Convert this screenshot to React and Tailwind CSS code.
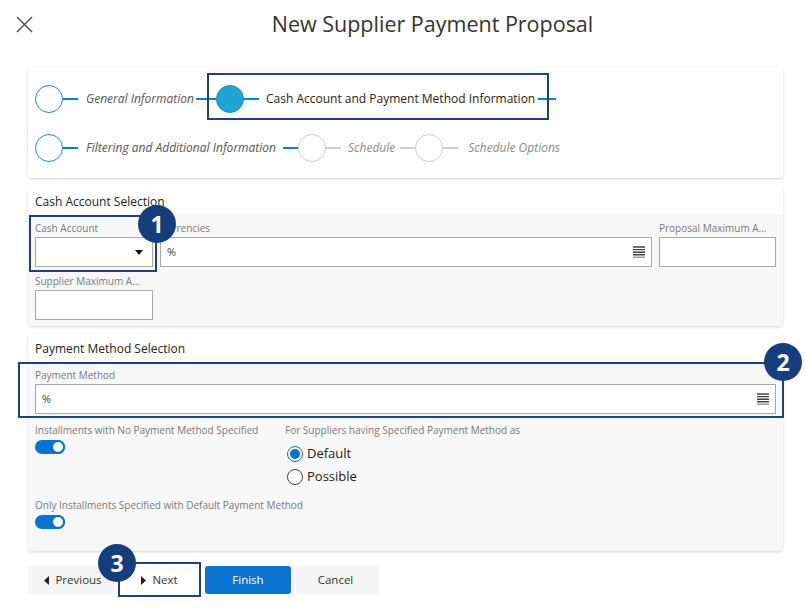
import React from "react";

const navy = "border-[#1f3f7f]";

function Badge({ n, className }) {
  return (
    <div
      className={`absolute z-20 w-[38px] h-[38px] rounded-full bg-[#173e7c] text-white flex items-center justify-center text-[23px] font-bold leading-none ${className}`}
    >
      {n}
    </div>
  );
}

function ListIcon() {
  return (
    <svg width="12" height="12" viewBox="0 0 12 12">
      <path d="M0 1h12M0 3.6h12M0 6.2h12M0 8.8h12" stroke="#444" strokeWidth="1.4" />
      <path d="M0 11.2h12" stroke="#999" strokeWidth="1.4" />
    </svg>
  );
}

function Field({ label, width, children }) {
  return (
    <div className={width}>
      <div className="text-[10px] leading-[15px] text-[#7a7a7a] truncate">{label}</div>
      <div className="mt-[1px] h-[30px] bg-white border border-[#a8a8a8] flex items-center px-[6px] text-[11px] text-[#444]">
        {children}
      </div>
    </div>
  );
}

function Toggle() {
  return (
    <div className="w-[30px] h-[14px] rounded-full bg-[#0b72cf] flex items-center justify-end">
      <div className="w-[14px] h-[14px] rounded-full bg-white border-2 border-[#0b72cf]" />
    </div>
  );
}

function Line({ gray, w = "w-[15px]", className = "" }) {
  return <div className={`${w} h-[2px] ${gray ? "bg-[#cfcfcf]" : "bg-[#0c80c2]"} ${className}`} />;
}

function Circle({ gray, filled }) {
  if (filled)
    return <div className="w-[28px] h-[28px] rounded-full bg-[#1ea5d3] border border-[#1b8dcf] shrink-0" />;
  return (
    <div
      className={`w-[28px] h-[28px] rounded-full border-[1.5px] shrink-0 ${gray ? "border-[#cdcdcd]" : "border-[#1b8dcf]"}`}
    />
  );
}

export default function App() {
  return (
    <div className="w-[805px] h-[613px] bg-white overflow-hidden" style={{ fontFamily: '"Open Sans", sans-serif' }}>
      {/* header */}
      <div className="h-[48px] flex items-center">
        <div className="w-[60px] h-[48px] flex items-center pl-[16px]">
          <svg width="17" height="17" viewBox="0 0 17 17">
            <path d="M1 1l15 15M16 1L1 16" stroke="#555" strokeWidth="1.5" />
          </svg>
        </div>
        <div className="flex-1 text-center text-[21.5px] text-[#333]">New Supplier Payment Proposal</div>
      </div>

      <div className="ml-[28px] w-[755px]">
        {/* steps */}
        <div className="relative mt-[19px] bg-white rounded-[4px] shadow-[0_1px_3px_rgba(0,0,0,0.16)] px-[7px] pt-[17px] pb-[17px] text-[12px]">
          <div className="flex items-center h-[28px] pt-[1px]">
            <Circle />
            <Line />
            <span className="ml-[8px] italic text-[#555]">General Information</span>
            <Line w="w-[20px]" className="ml-[2px]" />
            <Circle filled />
            <Line />
            <span className="ml-[7px] text-[#222]">Cash Account and Payment Method Information</span>
            <Line w="w-[18px]" className="ml-[3px]" />
          </div>
          <div className="flex items-center h-[28px] mt-[21px] pt-[1px]">
            <Circle />
            <Line />
            <span className="ml-[8px] italic text-[#555]">Filtering and Additional Information</span>
            <Line className="ml-[7px]" />
            <Circle gray />
            <Line gray />
            <span className="ml-[7px] italic text-[#8a8a8a]">Schedule</span>
            <Line gray className="ml-[5px]" />
            <Circle gray />
            <Line gray />
            <span className="ml-[10px] italic text-[#8a8a8a]">Schedule Options</span>
          </div>
          <div className={`absolute left-[179px] top-[6px] w-[342px] h-[47px] border-2 ${navy}`} />
        </div>

        {/* cash account selection */}
        <div className="relative mt-[8px] rounded-[4px] shadow-[0_1px_3px_rgba(0,0,0,0.16)]">
          <div className="h-[28px] bg-white rounded-t-[4px] px-[7px] pt-[3px] flex items-center text-[12px] font-medium text-[#222]">
            Cash Account Selection
          </div>
          <div className="bg-[#f7f7f7] rounded-b-[4px] px-[7px] pt-[7px] pb-[6px]">
            <div className="flex gap-[7px]">
              <Field label="Cash Account" width="w-[118px]">
                <div className="flex-1" />
                <svg width="8" height="5" viewBox="0 0 8 5" className="mr-[3px]">
                  <path d="M0 0h8L4 5z" fill="#111" />
                </svg>
              </Field>
              <Field label="Currencies" width="flex-1">
                <span className="flex-1">%</span>
                <ListIcon />
              </Field>
              <Field label="Proposal Maximum A..." width="w-[117px]" />
            </div>
            <div className="flex mt-[7px]">
              <Field label="Supplier Maximum A..." width="w-[118px]" />
            </div>
          </div>
          <div className={`absolute left-[1px] top-[29px] w-[128px] h-[57px] border-2 ${navy}`} />
          <Badge n="1" className="left-[110px] top-[19px]" />
        </div>

        {/* payment method selection */}
        <div className="relative mt-[7px] rounded-[4px] shadow-[0_1px_3px_rgba(0,0,0,0.16)]">
          <div className="h-[29px] bg-white rounded-t-[4px] px-[7px] pt-[3px] flex items-center text-[12px] font-medium text-[#222]">
            Payment Method Selection
          </div>
          <div className="bg-[#f7f7f7] rounded-b-[4px] px-[7px] pt-[6px] pb-[22px]">
            <Field label="Payment Method" width="w-full">
              <span className="flex-1">%</span>
              <ListIcon />
            </Field>
            <div className="flex mt-[9px]">
              <div className="w-[250px]">
                <div className="text-[10px] leading-[15px] text-[#7a7a7a]">
                  Installments with No Payment Method Specified
                </div>
                <div className="mt-[2px]">
                  <Toggle />
                </div>
              </div>
              <div>
                <div className="text-[10px] leading-[15px] text-[#7a7a7a]">
                  For Suppliers having Specified Payment Method as
                </div>
                <div className="mt-[6px] h-[20px] flex items-center pl-[2px] text-[13px] text-[#222]">
                  <div className="w-[16px] h-[16px] rounded-full border-[1.5px] border-[#0b72cf] flex items-center justify-center">
                    <div className="w-[10px] h-[10px] rounded-full bg-[#0b72cf]" />
                  </div>
                  <span className="ml-[4px]">Default</span>
                </div>
                <div className="mt-[3px] h-[20px] flex items-center pl-[2px] text-[13px] text-[#222]">
                  <div className="w-[16px] h-[16px] rounded-full border border-[#444] bg-white" />
                  <span className="ml-[4px]">Possible</span>
                </div>
              </div>
            </div>
            <div className="mt-[11px] text-[10px] leading-[15px] text-[#7a7a7a]">
              Only Installments Specified with Default Payment Method
            </div>
            <div className="mt-[2px]">
              <Toggle />
            </div>
          </div>
          <div className={`absolute left-[-10px] top-[29px] w-[766px] h-[56px] border-2 ${navy}`} />
          <Badge n="2" className="left-[736px] top-[10px]" />
        </div>

        {/* buttons */}
        <div className="relative mt-[15px] flex h-[28px] text-[11.5px]">
          <div className="w-[86px] bg-[#f5f5f5] flex items-center justify-center gap-[6px] pl-[4px] text-[#333]">
            <svg width="5" height="9" viewBox="0 0 5 9">
              <path d="M5 0v9L0 4.5z" fill="#222" />
            </svg>
            Previous
          </div>
          <div className="ml-[4px] w-[83px] bg-white flex items-center justify-center gap-[6px] text-[#333]">
            <svg width="5" height="9" viewBox="0 0 5 9">
              <path d="M0 0v9L5 4.5z" fill="#222" />
            </svg>
            Next
          </div>
          <div className="ml-[4px] w-[86px] bg-[#0b74d1] rounded-[3px] text-white flex items-center justify-center">
            Finish
          </div>
          <div className="ml-[1px] w-[87px] bg-[#f5f5f5] text-[#333] flex items-center justify-center">Cancel</div>
          <div className={`absolute left-[90px] top-[-4px] w-[83px] h-[35px] border-2 ${navy}`} />
          <Badge n="3" className="left-[70px] top-[-22px]" />
        </div>
      </div>
    </div>
  );
}
